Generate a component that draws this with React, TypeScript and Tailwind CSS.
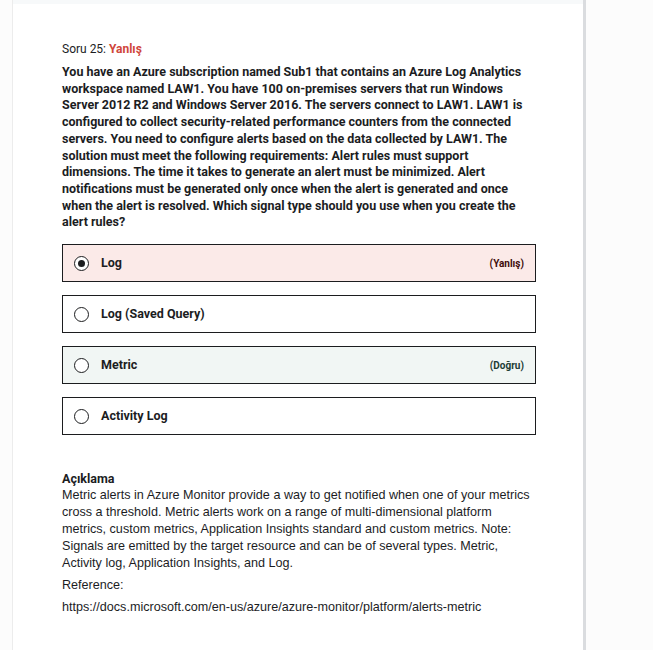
import React from "react";

const Radio = ({ checked }: { checked?: boolean }) => (
  <span className="flex h-[15px] w-[15px] shrink-0 items-center justify-center rounded-full border border-[#1c1d1f] bg-white">
    {checked && <span className="h-[7px] w-[7px] rounded-full bg-[#1c1d1f]" />}
  </span>
);

const Option = ({
  label,
  checked,
  tag,
  bg,
  tagColor,
}: {
  label: string;
  checked?: boolean;
  tag?: string;
  bg: string;
  tagColor?: string;
}) => (
  <div className={`flex h-[38px] items-center border border-[#1c1d1f] pl-[11px] pr-[11px] ${bg}`}>
    <Radio checked={checked} />
    <span className="ml-[12px] text-[12.5px] font-bold text-[#1c1d1f]">{label}</span>
    {tag && <span className={`ml-auto text-[10px] font-bold ${tagColor}`}>{tag}</span>}
  </div>
);

export default function App() {
  return (
    <div
      className="flex min-h-[650px] bg-[#fcfcfc]"
      style={{ fontFamily: "Roboto, 'Liberation Sans', sans-serif" }}
    >
      <div className="ml-[12px] w-[574px] border-l border-r-[3px] border-l-[#ececec] border-r-[#dadcdf] bg-white">
        <div className="h-[4px] bg-[#f7f9fa]" />
        <div className="pl-[49px] pt-[38px]">
          <div className="w-[474px]">
            <div className="text-[12px] leading-[14px] text-[#1c1d1f]">
              Soru 25: <span className="font-bold text-[#d0463b]">Yanlış</span>
            </div>
            <p className="mt-[8px] text-[12.5px] font-bold leading-[16.7px] text-[#1c1d1f]">
              You have an Azure subscription named Sub1 that contains an Azure Log Analytics workspace named LAW1. You
              have 100 on-premises servers that run Windows Server 2012 R2 and Windows Server 2016. The servers connect
              to LAW1. LAW1 is configured to collect security-related performance counters from the connected servers.
              You need to configure alerts based on the data collected by LAW1. The solution must meet the following
              requirements: Alert rules must support dimensions. The time it takes to generate an alert must be
              minimized. Alert notifications must be generated only once when the alert is generated and once when the
              alert is resolved. Which signal type should you use when you create the alert rules?
            </p>
            <div className="mt-[13px] flex flex-col gap-[13px]">
              <Option label="Log" checked tag="(Yanlış)" bg="bg-[#fbeae8]" tagColor="text-[#3d0c0a]" />
              <Option label="Log (Saved Query)" bg="bg-white" />
              <Option label="Metric" tag="(Doğru)" bg="bg-[#f1f6f4]" tagColor="text-[#1c3d36]" />
              <Option label="Activity Log" bg="bg-white" />
            </div>
            <div className="mt-[37px] text-[#1c1d1f]">
              <div className="text-[12.5px] font-bold leading-[14px]">Açıklama</div>
              <div
                className="mt-[1px] text-[12.6px] leading-[17px]"
                style={{ fontFamily: "'Liberation Sans', Arial, sans-serif" }}
              >
                <p>
                  Metric alerts in Azure Monitor provide a way to get notified when one of your metrics cross a
                  threshold. Metric alerts work on a range of multi-dimensional platform metrics, custom metrics,
                  Application Insights standard and custom metrics. Note: Signals are emitted by the target resource
                  and can be of several types. Metric, Activity log, Application Insights, and Log.
                </p>
                <p className="mt-[5px]">Reference:</p>
                <p className="mt-[5px]">https://docs.microsoft.com/en-us/azure/azure-monitor/platform/alerts-metric</p>
              </div>
            </div>
          </div>
        </div>
      </div>
    </div>
  );
}
